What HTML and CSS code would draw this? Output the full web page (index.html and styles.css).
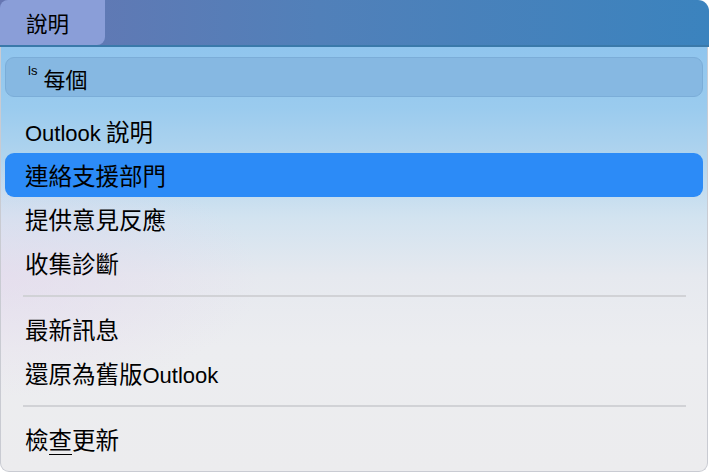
FILE: index.html
```html
<!DOCTYPE html>
<html lang="zh-Hant">
<head>
<meta charset="utf-8">
<title>說明</title>
<link rel="stylesheet" href="styles.css">
</head>
<body>
<div class="window">
  <div class="menubar">
    <div class="menubar-tab">說明</div>
  </div>
  <div class="dropdown">
    <div class="search">
      <span class="search-mark">ls</span><span class="search-text">每個</span>
    </div>
    <ul class="menu">
      <li class="menu-item"><span class="label"><span class="latin">Outlook</span> 說明</span></li>
      <li class="menu-item is-active"><span class="label">連絡支援部門</span></li>
      <li class="menu-item"><span class="label">提供意見反應</span></li>
      <li class="menu-item"><span class="label">收集診斷</span></li>
      <li class="menu-sep"></li>
      <li class="menu-item"><span class="label">最新訊息</span></li>
      <li class="menu-item"><span class="label">還原為舊版<span class="latin">Outlook</span></span></li>
      <li class="menu-sep"></li>
      <li class="menu-item"><span class="label">檢<span class="mnemonic">查</span>更新</span></li>
    </ul>
  </div>
</div>
</body>
</html>
```

FILE: styles.css
```css
* {
  box-sizing: border-box;
}

html,
body {
  margin: 0;
  padding: 0;
  background: #ffffff;
}

body {
  width: 709px;
  height: 472px;
  overflow: hidden;
  font-family: "Noto Sans CJK TC", "Liberation Sans", sans-serif;
  color: #000;
}

.window {
  display: flex;
  flex-direction: column;
  width: 709px;
  height: 472px;
}

/* Title-style menu bar */
.menubar {
  height: 47px;
  flex: none;
  display: flex;
  background: linear-gradient(90deg, #6676b2 0%, #5180b9 45%, #3b83be 100%);
  border-top-right-radius: 11px;
  border-bottom: 2px solid #3a79aa;
}

.menubar-tab {
  width: 105px;
  height: 45px;
  padding-left: 26px;
  display: flex;
  align-items: center;
  font-size: 21.5px;
  background: #8a9ed8;
  border-top-left-radius: 8px;
  border-bottom-right-radius: 8px;
}

/* Dropdown panel */
.dropdown {
  flex: 1;
  width: 708px;
  padding: 10px 4px 8px 4px;
  border: 1px solid #c9cbd2;
  border-top: none;
  border-bottom-left-radius: 9px;
  border-bottom-right-radius: 9px;
  background:
    radial-gradient(ellipse 260px 120px at 0 230px, rgba(228, 214, 236, 0.55), rgba(228, 214, 236, 0)),
    linear-gradient(180deg, #90c5ee 0px, #9acbee 60px, #b0d4ee 110px, #d2e3f0 170px, #e6e9ef 230px, #ecedf0 300px, #ececee 100%);
}

.search {
  height: 40px;
  display: flex;
  align-items: center;
  padding-left: 22px;
  background: #86b8e2;
  border: 1px solid #7badd8;
  border-radius: 9px;
}

.search-mark {
  font-family: "Liberation Sans", sans-serif;
  font-size: 13px;
  align-self: flex-start;
  margin-top: 5px;
  margin-right: 6px;
}

.search-text {
  font-size: 22px;
  margin-top: 2px;
}

.menu {
  list-style: none;
  margin: 12px 0 0 0;
  padding: 0;
}

.menu-item {
  height: 44px;
  display: flex;
  align-items: center;
  padding-left: 20px;
  font-size: 23.5px;
  border-radius: 9px;
}

.label {
  white-space: pre;
}

.menu-item.is-active {
  background: #2c8bf7;
}

.latin {
  font-family: "Liberation Sans", sans-serif;
  font-size: 22px;
}

/* keyboard mnemonic: underlined character */
.mnemonic {
  display: inline-block;
  line-height: 1;
  padding-bottom: 2px;
  margin-bottom: -2px;
  border-bottom: 1px solid #000;
}

.menu-sep {
  height: 2px;
  margin: 10px 17px 10px 18px;
  background: #d1d2d6;
}
```
